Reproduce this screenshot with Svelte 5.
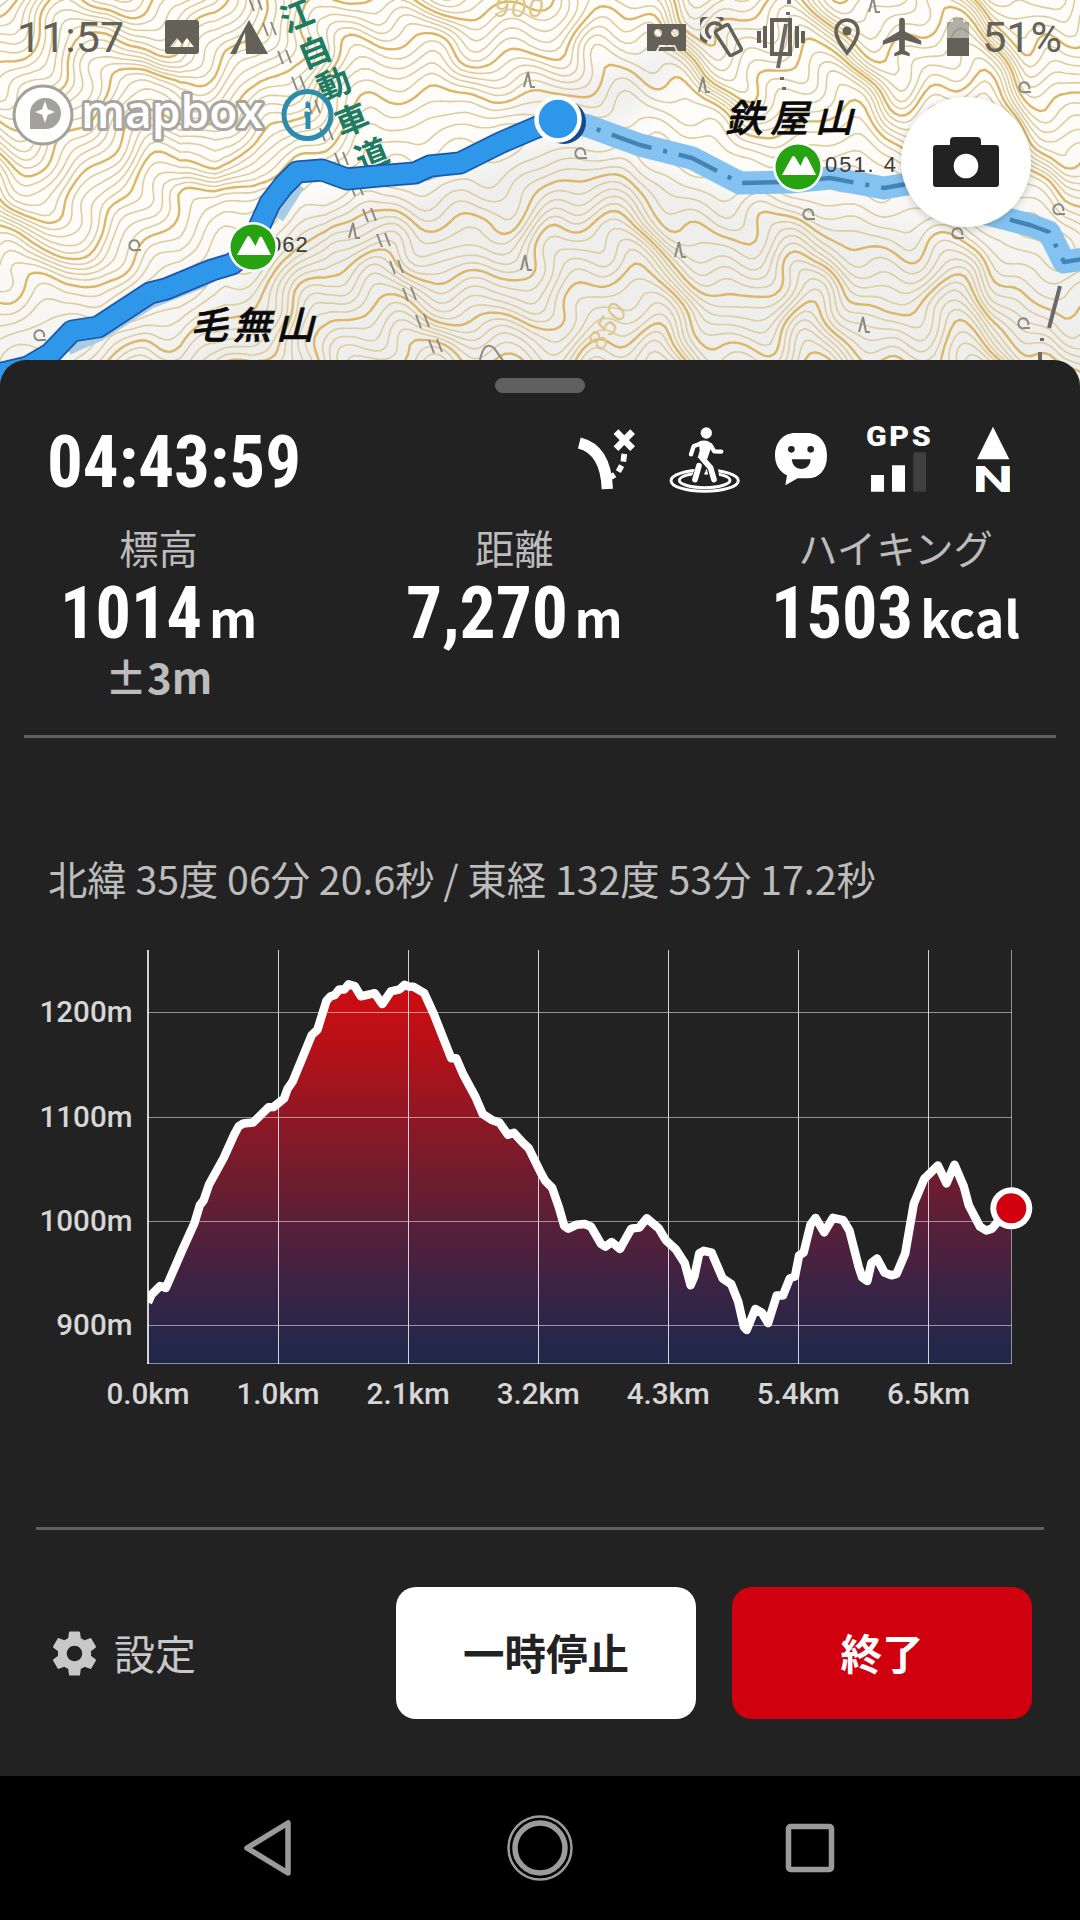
<!--
  HikeRecorder — recording screen: trail map, live stats and elevation profile.
-->
<script lang="ts">
	type Point = [number, number];

	const MAP_W = 1080;
	const MAP_H = 400;
	const INTERVAL = 8.5;

	const walked: Point[] = [
		[-10, 376], [28, 367], [50, 354], [72, 331], [98, 327], [150, 293], [166, 289],
		[212, 270], [232, 264], [252, 248], [260, 225], [270, 203], [284, 185], [297, 172],
		[322, 170], [347, 179], [378, 176], [415, 173], [430, 166], [460, 163], [500, 143],
		[535, 128], [558, 119]
	];

	const planned: Point[] = [
		[558, 119], [588, 126], [640, 145], [692, 158], [740, 183], [790, 182], [830, 178],
		[884, 188], [930, 180], [980, 212], [1030, 225], [1049, 232], [1064, 262], [1090, 258]
	];

	const ridge = [...walked, ...planned.slice(1)];

	function toPath(points: Point[]) {
		return points.map(([x, y], i) => `${i ? 'L' : 'M'}${x.toFixed(1)} ${y.toFixed(1)}`).join('');
	}

	function ridgeY(x: number) {
		for (let i = 1; i < ridge.length; i++) {
			if (x <= ridge[i][0]) {
				const [x0, y0] = ridge[i - 1];
				const [x1, y1] = ridge[i];
				return y0 + ((x - x0) / (x1 - x0)) * (y1 - y0);
			}
		}
		return 259;
	}

	// terrain falls away from the ridge, spurs and gullies widen with distance
	function height(x: number, y: number) {
		let mean = 0;
		for (let k = -2; k <= 2; k++) mean += ridgeY(Math.min(1080, Math.max(0, x + k * 36))) / 5;
		const d = Math.sqrt((y - mean) ** 2 + 200);
		const side = y < mean ? 0.5 : -0.3;
		const s = x + side * d + 9 * Math.sin(y / 27 + x / 110) + 3.5 * Math.sin(y / 10 + x / 60);
		const spur = Math.sin(s / 32 + 1.2 * Math.sin(x / 140)) + 0.45 * Math.sin(s / 13 + 2);
		const rough = 1.5 * Math.sin(x / 8 + y / 19) + 1.8 * Math.sin(x / 12 - y / 14);
		return 300 - d * 0.82 + Math.min(d, 90) * 0.25 * spur + rough;
	}

	// marching squares over the terrain grid
	function contours() {
		const step = 5;
		const cols = MAP_W / step;
		const rows = MAP_H / step;
		const grid: number[][] = [];
		for (let j = 0; j <= rows; j++) {
			grid.push([]);
			for (let i = 0; i <= cols; i++) grid[j].push(height(i * step, j * step));
		}
		let minor = '';
		let major = '';
		for (let j = 0; j < rows; j++) {
			for (let i = 0; i < cols; i++) {
				const corners = [
					[i, j, grid[j][i]],
					[i + 1, j, grid[j][i + 1]],
					[i + 1, j + 1, grid[j + 1][i + 1]],
					[i, j + 1, grid[j + 1][i]]
				];
				const values = corners.map((c) => c[2]);
				const lo = Math.ceil(Math.min(...values) / INTERVAL);
				const hi = Math.floor(Math.max(...values) / INTERVAL);
				for (let n = lo; n <= hi; n++) {
					const level = n * INTERVAL;
					const hits: Point[] = [];
					for (let e = 0; e < 4; e++) {
						const [ax, ay, av] = corners[e];
						const [bx, by, bv] = corners[(e + 1) % 4];
						if (av < level !== bv < level) {
							const t = (level - av) / (bv - av);
							hits.push([(ax + (bx - ax) * t) * step, (ay + (by - ay) * t) * step]);
						}
					}
					for (let h = 0; h + 1 < hits.length; h += 2) {
						const d = toPath([hits[h], hits[h + 1]]);
						if (n % 5 === 0) major += d;
						else minor += d;
					}
				}
			}
		}
		return { minor, major };
	}

	const terrain = contours();

	const roadName = [
		{ c: '江', x: 296, y: 14 },
		{ c: '自', x: 314, y: 50 },
		{ c: '動', x: 333, y: 82 },
		{ c: '車', x: 351, y: 118 },
		{ c: '道', x: 371, y: 153 }
	];

	const peaks: Point[] = [[253, 247], [798, 167]];
	const tunnel: Point[] = [
		[254, 5], [268, 30], [283, 58], [297, 84], [312, 108], [325, 135], [340, 160], [355, 190],
		[368, 216], [382, 241], [395, 268], [408, 295], [421, 322], [434, 347]
	];
	const broadleaf: Point[] = [
		[134, 245], [39, 335], [580, 153], [808, 214], [1024, 87], [957, 233], [1058, 209], [1023, 323]
	];
	const conifer: Point[] = [
		[528, 80], [353, 231], [525, 263], [703, 85], [679, 250], [863, 325], [873, 5]
	];

	const stats = [
		{ label: '標高', value: '1014', unit: 'm', width: 142, note: '±3m' },
		{ label: '距離', value: '7,270', unit: 'm', width: 162, note: '' },
		{ label: 'ハイキング', value: '1503', unit: 'kcal', width: 142, note: '' }
	];

	const PLOT_W = 864;
	const PLOT_H = 414;
	const xTicks = ['0.0km', '1.0km', '2.1km', '3.2km', '4.3km', '5.4km', '6.5km'];
	const yTicks = [
		{ label: '1200m', y: 62.5 },
		{ label: '1100m', y: 167.5 },
		{ label: '1000m', y: 271.5 },
		{ label: '900m', y: 375.5 }
	];

	const track: Point[] = [
		[430, 1208], [440, 1188], [465, 1165], [482, 1170], [530, 1070], [565, 1000], [580, 955],
		[592, 940], [607, 900], [650, 830], [680, 770], [693, 748], [707, 740], [735, 738],
		[780, 698], [795, 697], [825, 675], [835, 650], [850, 630], [905, 510], [922, 495],
		[948, 420], [960, 408], [972, 405], [985, 390], [1000, 390], [1012, 377], [1030, 381],
		[1048, 408], [1088, 400], [1110, 428], [1135, 395], [1160, 390], [1175, 378], [1188, 383],
		[1200, 383], [1232, 400], [1260, 455], [1310, 570], [1325, 570], [1345, 612], [1380, 670],
		[1402, 716], [1430, 732], [1450, 738], [1475, 770], [1492, 765], [1520, 792], [1535, 805],
		[1568, 865], [1583, 890], [1603, 908], [1623, 960], [1638, 1008], [1650, 1015],
		[1673, 1005], [1698, 1003], [1716, 1010], [1745, 1055], [1758, 1062], [1776, 1050],
		[1800, 1068], [1833, 1015], [1856, 1012], [1878, 988], [1913, 1015], [1933, 1045],
		[1963, 1070], [1988, 1105], [2005, 1163], [2016, 1140], [2030, 1080], [2043, 1073],
		[2066, 1078], [2098, 1145], [2123, 1160], [2143, 1205], [2160, 1272], [2168, 1280],
		[2193, 1225], [2212, 1235], [2230, 1262], [2255, 1190], [2273, 1190], [2293, 1145],
		[2308, 1140], [2320, 1085], [2333, 1078], [2353, 1005], [2368, 987], [2393, 1025],
		[2418, 987], [2448, 993], [2466, 1020], [2493, 1115], [2503, 1142], [2518, 1152],
		[2530, 1105], [2546, 1093], [2568, 1130], [2588, 1137], [2603, 1133], [2628, 1080],
		[2653, 950], [2683, 885], [2723, 850], [2748, 897], [2771, 848], [2798, 905],
		[2813, 955], [2845, 1010], [2863, 1020], [2880, 1015], [2908, 985], [2936, 962]
	];

	const profile: Point[] = track.map(([x, y]) => [((x - 430) / 2508) * PLOT_W, (y - 287) / 2.613]);
	const here = profile[profile.length - 1];
	const line = toPath(profile);
	const area = `${line}V${PLOT_H}H0Z`;
</script>

<div class="screen">
	<section class="map">
		<svg class="terrain" width="1080" height="400" viewBox="0 0 1080 400">
			<defs>
				<linearGradient id="paper" x1="0" y1="0" x2="0.25" y2="1">
					<stop offset="0" stop-color="#fefdfa" />
					<stop offset="0.55" stop-color="#fdfcf9" />
					<stop offset="1" stop-color="#eeeeec" />
				</linearGradient>
				<filter id="soft" x="-20%" y="-20%" width="140%" height="140%">
					<feGaussianBlur stdDeviation="14" />
				</filter>
			</defs>
			<rect width="1080" height="400" fill="url(#paper)" />
			<path
				filter="url(#soft)"
				fill="#eeeeed"
				d="M300 210L410 190L560 135L740 200L900 225L1030 290L1040 420H120L200 330Z"
			/>
			<path filter="url(#soft)" fill="#efefee" d="M530 90L500 110L620 130L690 60L760 20L700 0L640 60Z" />
			<path class="contour" d={terrain.minor} />
			<path class="contour major" d={terrain.major} />

			{#each tunnel as [x, y]}
				<path class="tick" d="M{x - 5} {y - 7}l5 13M{x + 3} {y - 8}l5 13" />
			{/each}
			{#each broadleaf as [x, y]}
				<path class="tick" d="M{x + 2} {y + 5}a5 5 0 1 1 3 -3M{x + 1} {y + 5}h6" />
			{/each}
			{#each conifer as [x, y]}
				<path class="tick" d="M{x - 4} {y + 7}L{x} {y - 8}L{x + 3} {y + 7}h4" />
			{/each}
			<path class="border" d="M789 0V4M788 12V15M786 24L778 68M782 77V80M784 87V90" />
			<path class="border" d="M1060 286L1049 328M1042 338V341M1040 352V372" />
			<path class="tick" d="M480 360q4 -20 14 -12l10 14" />

			<text class="height" x="494" y="17">900</text>
			<text class="height" transform="translate(602 352) rotate(-58)">850</text>
			{#each roadName as { c, x, y }}
				<text class="road" transform="translate({x} {y}) rotate(-22)">{c}</text>
			{/each}

			<path class="planned" d={toPath(planned)} />
			<path class="planned-core" d={toPath(planned)} />
			<path class="shadow" d="M68 349L100 335L150 303L205 281M278 218L299 185M425 176L520 140" />
			<path class="walked-edge" d={toPath(walked)} />
			<path class="walked" d={toPath(walked)} />

			<text class="spot" x="269" y="252">062</text>
			<text class="spot" x="825" y="172" textLength="72">051. 4</text>
			<text class="peak" transform="translate(190 339) skewX(-14)" textLength="124">毛無山</text>
			<text class="peak" transform="translate(725 132) skewX(-14)" textLength="128">鉄屋山</text>

			{#each peaks as [x, y]}
				<g transform="translate({x} {y})">
					<circle r="25" fill="#fff" />
					<circle r="22.5" fill="#27a211" />
					<path fill="#fff" d="M-16 8L-6 -10Q-4.500 -12 -3 -10L2.500 -1L6 -9Q7.500 -12 9.500 -9L18 8Z" />
				</g>
			{/each}
			<circle cx="564" cy="122" r="22" fill="#174a8c" />
			<circle class="me" cx="558" cy="119" r="21.500" />

			<g class="mapbox">
				<circle cx="43" cy="115" r="29" />
				<path
					fill="#a2a19d"
					d="M30 129V114A15.500 15.500 0 1 1 45.500 129ZM45 101L42.200 109.200L35 112L42.200 114.800L45 123L47.800 114.800L55 112L47.800 109.200Z"
					fill-rule="evenodd"
				/>
				<text x="81" y="128" textLength="182" lengthAdjust="spacingAndGlyphs">mapbox</text>
			</g>
			<circle cx="307.500" cy="115" r="23.500" fill="none" stroke="#2b8cac" stroke-width="5" />
			<path stroke="#2b8cac" stroke-width="5" d="M308 102.500v5.500M308 112v17M304.500 114h4" />
		</svg>

		<header class="status">
			<span class="clock">11:57</span>
			<svg class="photo" width="34" height="34" viewBox="0 0 34 34">
				<path
					fill-rule="evenodd"
					d="M3 0H31Q34 0 34 3V31Q34 34 31 34H3Q0 34 0 31V3Q0 0 3 0ZM5 27L12 18L17 24L22 18L29 27Z"
				/>
			</svg>
			<svg class="tent" width="38" height="34" viewBox="0 0 38 34">
				<path d="M19 0L38 34H16L15 12L6 34H0Z" />
			</svg>
			<div class="system">
				<svg width="39" height="27" viewBox="0 0 39 27">
					<path
						fill-rule="evenodd"
						d="M0 0H39V27H31L28 21H12L9 27H0ZM11 5a4 4 0 1 0 .1 0ZM28 5a4 4 0 1 0 .1 0ZM13 23H27L29 27H11Z"
					/>
				</svg>
				<svg width="44" height="40" viewBox="0 0 44 40" fill="none" stroke="#646158" stroke-width="3.500" stroke-linejoin="round">
					<path d="M16 14L26 8Q28 7 29 9L41 31Q42 33 40 34L32 38Q30 39 29 37L16 17Q15 15 16 14ZM11 21A8 8 0 1 1 21 9M7 25A14 14 0 1 1 23 3" />
				</svg>
				<svg width="48" height="38" viewBox="0 0 48 38" fill="none" stroke="#646158" stroke-width="4">
					<path d="M15 2H33V36H15ZM8 8V30M40 8V30M2 13V25M46 13V25" />
				</svg>
				<svg class="pin" width="28" height="38" viewBox="0 0 28 38">
					<path fill="none" stroke="#646158" stroke-width="3.500" d="M14 35C8 27 3 20 3 13a11 11 0 0 1 22 0C25 20 20 27 14 35Z" />
					<circle cx="14" cy="13" r="4.500" />
				</svg>
				<svg width="46" height="46" viewBox="0 0 24 24">
					<path d="M22 16v-2l-8.500-5V3.500c0-.83-.67-1.500-1.500-1.500s-1.500.67-1.500 1.500V9L2 14v2l8.500-2.500V19L8 20.500V22l4-1 4 1v-1.500L13.500 19v-5.500L22 16z" />
				</svg>
				<svg class="battery" width="22" height="38" viewBox="0 0 22 38">
					<path opacity="0.5" d="M0 4H6V0H16V4H22V20H0Z" />
					<path d="M0 20H22V38H0Z" />
				</svg>
				<span>51%</span>
			</div>
		</header>

		<button class="camera" aria-label="カメラ">
			<svg width="66" height="50" viewBox="0 0 66 50">
				<path
					fill="#222"
					d="M3 8H17V4Q17 0 21 0H44Q48 0 48 4V8H63Q66 8 66 11V47Q66 50 63 50H3Q0 50 0 47V11Q0 8 3 8Z"
				/>
				<circle cx="33" cy="29" r="12.300" fill="#fff" />
			</svg>
		</button>
	</section>

	<main class="sheet">
		<div class="handle"></div>

		<div class="top-row">
			<svg class="timer" width="256" height="66" viewBox="0 0 256 66">
				<text x="-1" y="60.500" textLength="254" lengthAdjust="spacingAndGlyphs">04:43:59</text>
			</svg>
			<div class="indicators">
				<svg width="59.300" height="67.300" viewBox="50 48 178 202">
					<path d="M57 99Q137 119 141 237" fill="none" stroke="#fff" stroke-width="34" />
					<path d="M167 65L217 116M217 65L167 116" stroke="#fff" stroke-width="20" stroke-linecap="butt" />
					<path d="M192 132L189 155M184 167L174 185M163 194L152 202" stroke="#fff" stroke-width="17" />
				</svg>
				<svg width="71.300" height="67.300" viewBox="328 48 214 202" fill="none" stroke="#fff">
					<ellipse cx="435" cy="212" rx="101" ry="32" stroke-width="9" />
					<ellipse cx="435" cy="211" rx="76" ry="22" stroke-width="9" />
					<path d="M433 152L410 208M428 135L458 174L464 209" stroke="#222" stroke-width="32" />
					<circle cx="440" cy="69" r="17" fill="#fff" stroke="none" />
					<path
						d="M425 100L402 109L394 133M452 105L464 124L485 125"
						stroke-width="13"
						stroke-linecap="round"
						stroke-linejoin="round"
					/>
					<path d="M418 95Q433 88 450 96L455 110L443 147L414 144L420 122Z" fill="#fff" stroke="none" />
					<path
						d="M418 167L406 209M427 144L453 174L463 209"
						stroke-width="17"
						stroke-linecap="round"
						stroke-linejoin="round"
					/>
				</svg>
				<svg width="58.700" height="67.300" viewBox="642 48 176 202">
					<path
						fill="#fff"
						d="M705 69H742C776 69 801 96 801 137C801 181 777 205 742 205H713L676 226L681 196C659 185 645 164 645 137C645 96 671 69 705 69Z"
					/>
					<circle cx="694" cy="118" r="10" fill="#222" />
					<circle cx="752" cy="118" r="10" fill="#222" />
					<path fill="#222" d="M695 148H752Q750 177 724 177Q698 177 695 148Z" />
				</svg>
				<svg width="76.700" height="67.300" viewBox="918 48 230 202">
					<text class="gps" x="918" y="107" textLength="202" lengthAdjust="spacingAndGlyphs">GPS</text>
					<path fill="#fff" d="M933 195H972V245H933ZM996 166H1035V245H996Z" />
					<path fill="#404040" d="M1060 127H1098V245H1060Z" />
				</svg>
				<svg width="34" height="67.300" viewBox="1248 48 102 202">
					<path fill="#fff" d="M1299 50L1348 148H1251Z" />
					<text class="north" x="1237" y="245" textLength="124" lengthAdjust="spacingAndGlyphs">N</text>
				</svg>
			</div>
		</div>

		<div class="stats">
			{#each stats as stat (stat.label)}
				<div class="stat">
					<span class="label">{stat.label}</span>
					<div class="reading">
						<svg width={stat.width} height="63" viewBox="0 0 {stat.width} 63">
							<text x="0" y="63" textLength={stat.width} lengthAdjust="spacingAndGlyphs">{stat.value}</text>
						</svg>
						<span class="unit">{stat.unit}</span>
					</div>
					<span class="note">{stat.note}</span>
				</div>
			{/each}
		</div>

		<hr class="rule" />

		<p class="coords">北緯 35度 06分 20.6秒 / 東経 132度 53分 17.2秒</p>

		<svg class="chart" width="1080" height="480" viewBox="-148 0 1080 480">
			<defs>
				<linearGradient id="elevation" gradientUnits="userSpaceOnUse" x1="0" y1="30" x2="0" y2="414">
					<stop offset="0" stop-color="#d00c10" />
					<stop offset="0.180" stop-color="#b51118" />
					<stop offset="0.500" stop-color="#721c2e" />
					<stop offset="0.800" stop-color="#3b2344" />
					<stop offset="1" stop-color="#1c294c" />
				</linearGradient>
				<clipPath id="plot"><rect x="0" y="0" width="880" height="414" /></clipPath>
			</defs>
			<path d={area} fill="url(#elevation)" />
			{#each yTicks as tick}
				<path class="grid-h" d="M0 {tick.y}H{PLOT_W}" />
				<text class="axis" x="-15.500" y={tick.y + 9.500} text-anchor="end">{tick.label}</text>
			{/each}
			{#each xTicks as label, i}
				<path class="grid-v" d="M{Math.round(i * 130.07) + 0.5} 0V{PLOT_H}" />
				<text class="axis" x={i * 130.07} y="454" text-anchor="middle">{label}</text>
			{/each}
			<path class="grid-h" d="M{PLOT_W - 0.5} 0V{PLOT_H}M0 {PLOT_H - 0.5}H{PLOT_W}" />
			<path class="grid-v" d="M-0.500 0V{PLOT_H}" />
			<path class="profile" d={line} clip-path="url(#plot)" />
			<circle cx={here[0]} cy={here[1]} r="21" fill="#fff" />
			<circle cx={here[0]} cy={here[1]} r="15" fill="#d0000f" />
		</svg>

		<hr class="rule lower" />

		<div class="actions">
			<button class="settings">
				<svg width="53" height="53" viewBox="0 0 24 24">
					<path
						fill="#c8c8c8"
						d="M19.430 12.980c.04-.32.07-.64.07-.98s-.03-.66-.07-.98l2.110-1.650c.19-.15.24-.42.12-.64l-2-3.460c-.12-.22-.39-.3-.61-.22l-2.490 1c-.52-.4-1.080-.73-1.690-.98l-.38-2.650C14.460 2.180 14.250 2 14 2h-4c-.25 0-.46.18-.49.42l-.38 2.650c-.61.25-1.170.59-1.690.98l-2.490-1c-.23-.09-.49 0-.61.22l-2 3.460c-.13.22-.07.49.12.64l2.110 1.650c-.04.32-.07.65-.07.98s.03.66.07.98l-2.110 1.650c-.19.15-.24.42-.12.64l2 3.460c.12.22.39.3.61.22l2.490-1c.52.4 1.080.73 1.690.98l.38 2.650c.03.24.24.42.49.42h4c.25 0 .46-.18.49-.42l.38-2.650c.61-.25 1.170-.59 1.690-.98l2.490 1c.23.09.49 0 .61-.22l2-3.460c.12-.22.07-.49-.12-.64l-2.110-1.650zM12 15.500c-1.930 0-3.500-1.570-3.500-3.500s1.570-3.500 3.500-3.500 3.500 1.570 3.500 3.500-1.570 3.500-3.500 3.500z"
					/>
				</svg>
				<span>設定</span>
			</button>
			<button class="btn pause">一時停止</button>
			<button class="btn finish">終了</button>
		</div>
	</main>

	<nav class="navbar">
		<svg width="66" height="66" viewBox="0 0 66 66">
			<path d="M10 33L51 8V58Z" />
		</svg>
		<svg width="70" height="70" viewBox="0 0 70 70">
			<circle cx="35" cy="35" r="31.500" stroke-width="2.500" />
			<circle cx="35" cy="35" r="25" />
		</svg>
		<svg width="66" height="66" viewBox="0 0 66 66">
			<rect x="11.500" y="11.500" width="43" height="43" rx="2" />
		</svg>
	</nav>
</div>

<style>
	:global(body) {
		background: #000;
	}

	.screen {
		width: 1080px;
		height: 1920px;
		display: flex;
		flex-direction: column;
		overflow: hidden;
		font-family: 'Noto Sans CJK JP', sans-serif;
		color: #fff;
	}

	button {
		border: none;
		padding: 0;
		font: inherit;
		color: inherit;
		background: none;
	}

	svg {
		display: block;
		flex: none;
	}

	.map {
		position: relative;
		height: 360px;
		flex: none;
	}

	.terrain {
		position: absolute;
		inset: 0;
	}

	.contour {
		fill: none;
		stroke: #ddcd9f;
		stroke-width: 1.6;
		stroke-linecap: round;
	}

	.contour.major {
		stroke: #dbb767;
		stroke-width: 2.4;
	}

	.tick {
		fill: none;
		stroke: #8b8984;
		stroke-width: 2;
	}

	.border {
		fill: none;
		stroke: #6b6a69;
		stroke-width: 4;
	}

	.height {
		font: italic 27px 'Liberation Sans', sans-serif;
		fill: #dfc68b;
		letter-spacing: 2px;
	}

	.road {
		font: bold 33px 'Noto Sans CJK JP', sans-serif;
		fill: #1f7c64;
		text-anchor: middle;
		dominant-baseline: central;
	}

	.spot {
		font: 22px 'Liberation Sans', sans-serif;
		fill: #3c3b39;
		letter-spacing: 1px;
	}

	.peak {
		font: 500 38px 'Noto Sans CJK JP', sans-serif;
		fill: #0a0a0a;
		stroke: #0a0a0a;
		stroke-width: 0.6;
	}

	.planned,
	.planned-core,
	.walked,
	.walked-edge,
	.shadow {
		fill: none;
		stroke-linejoin: round;
	}

	.planned {
		stroke: #84c3f1;
		stroke-width: 23;
	}

	.planned-core {
		stroke: #4384b5;
		stroke-width: 4.5;
		stroke-dasharray: 42 12 4 12;
		stroke-dashoffset: 14;
	}

	.shadow {
		stroke: #a9cbe3;
		stroke-width: 12;
	}

	.walked-edge {
		stroke: #1859ac;
		stroke-width: 23;
	}

	.walked {
		stroke: #2e97ea;
		stroke-width: 19.5;
	}

	.me {
		fill: #2e97ea;
		stroke: #fff;
		stroke-width: 4.5;
	}

	.mapbox circle {
		fill: #fffffff0;
		stroke: #a2a19d;
		stroke-width: 3;
	}

	.mapbox text {
		font: 600 46px 'Open Sans', sans-serif;
		fill: #fff;
		stroke: #a8a6a0;
		stroke-width: 6;
		stroke-linejoin: round;
		paint-order: stroke;
	}

	.status {
		position: relative;
		height: 74px;
		display: flex;
		align-items: center;
		padding: 0 18px 0 17px;
		font: 43px Roboto, sans-serif;
		color: #646158;
		fill: #646158;
	}

	.photo {
		margin-left: 41px;
	}

	.tent {
		margin-left: 31px;
	}

	.system {
		margin-left: auto;
		display: flex;
		align-items: center;
		gap: 13.5px;
	}

	.pin {
		margin: 0 5px 0 14px;
	}

	.battery {
		margin-left: 8px;
	}

	.camera {
		position: absolute;
		left: 901px;
		top: 97px;
		width: 130px;
		height: 130px;
		border-radius: 50%;
		background: #fff;
		box-shadow: 0 2px 8px #0003;
		display: flex;
		align-items: center;
		justify-content: center;
	}

	.sheet {
		position: relative;
		height: 1416px;
		flex: none;
		background: #222;
		border-radius: 26px 26px 0 0;
		display: flex;
		flex-direction: column;
	}

	.handle {
		width: 90px;
		height: 15px;
		margin: 18px auto 0;
		border-radius: 8px;
		background: #606060;
	}

	.top-row {
		display: flex;
		justify-content: space-between;
		height: 67px;
		margin-top: 33px;
		padding: 0 70px 0 48px;
	}

	.timer,
	.reading svg {
		overflow: visible;
	}

	.timer text,
	.reading text {
		font: bold 73px 'Roboto Condensed', Roboto, sans-serif;
		fill: #fff;
	}

	.indicators {
		display: flex;
		gap: 33.3px;
	}

	.gps {
		font: 900 82px Roboto, sans-serif;
		fill: #fff;
		letter-spacing: 7px;
	}

	.north {
		font: bold 110px Roboto, sans-serif;
		fill: #fff;
	}

	.stats {
		display: flex;
		justify-content: space-between;
		padding: 0 60px;
		margin-top: 26px;
		height: 216px;
	}

	.stat {
		display: flex;
		flex-direction: column;
		align-items: center;
	}

	.label {
		font-size: 39.3px;
		line-height: 56px;
		color: #bcbcbc;
	}

	.reading {
		display: flex;
		align-items: baseline;
		height: 71px;
	}

	.unit {
		font-size: 50px;
		font-weight: bold;
		line-height: 68px;
		margin-left: 7px;
	}

	.note {
		font-size: 42px;
		font-weight: bold;
		line-height: 60px;
		color: #bcbcbc;
	}

	.rule {
		width: 1032px;
		height: 3px;
		margin: 0 auto;
		border: none;
		background: #606060;
		flex: none;
	}

	.coords {
		margin: 112px 0 0 48px;
		font-size: 39.3px;
		line-height: 56px;
		color: #bcbcbc;
		white-space: nowrap;
	}

	.chart {
		margin-top: 44px;
	}

	.axis {
		font: 500 29.6px Roboto, sans-serif;
		fill: #d6d6d6;
	}

	.grid-h {
		fill: none;
		stroke: #fff;
		stroke-opacity: 0.5;
		stroke-width: 1;
	}

	.grid-v {
		stroke: #fff;
		stroke-opacity: 0.8;
		stroke-width: 1;
	}

	.profile {
		fill: none;
		stroke: #fff;
		stroke-width: 8.5;
		stroke-linejoin: round;
	}

	.rule.lower {
		width: 1008px;
		margin-top: 97px;
	}

	.actions {
		display: flex;
		align-items: center;
		margin-top: 57px;
		padding: 0 48px;
	}

	.settings {
		display: flex;
		align-items: center;
		gap: 13px;
		width: 348px;
		font-size: 41px;
		color: #c8c8c8;
	}

	.settings span,
	.btn {
		line-height: 56px;
		padding-bottom: 3px;
	}

	.btn {
		box-sizing: border-box;
		width: 300px;
		height: 132px;
		border-radius: 20px;
		font-size: 41.5px;
		font-weight: bold;
	}

	.pause {
		background: #fff;
		color: #222;
		margin-right: 36px;
	}

	.finish {
		background: #d0000f;
	}

	.navbar {
		height: 144px;
		display: flex;
		align-items: center;
		justify-content: center;
		gap: 202px;
		background: #000;
		fill: none;
		stroke: #9b9b9b;
		stroke-width: 5.5;
		stroke-linejoin: round;
	}
</style>
